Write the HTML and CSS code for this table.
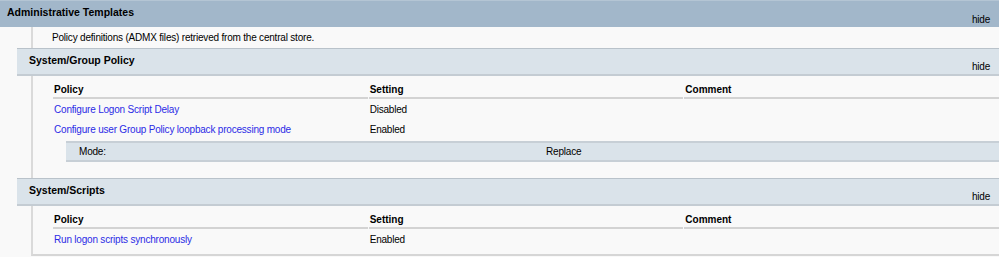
FILE: index.html
```html
<!DOCTYPE html>
<html>
<head>
<meta charset="utf-8">
<link rel="stylesheet" href="styles.css">
</head>
<body>
<div class="h0"><span class="title">Administrative Templates</span><span class="hide">hide</span></div>
<div class="c0">
  <div class="info">Policy definitions (ADMX files) retrieved from the central store.</div>
  <div class="h1"><span class="title">System/Group Policy</span><span class="hide">hide</span></div>
  <div class="c1 c1-long">
    <table class="pt">
      <thead><tr><th>Policy</th><th>Setting</th><th>Comment</th></tr></thead>
      <tbody>
        <tr><td><span class="link">Configure Logon Script Delay</span></td><td>Disabled</td><td></td></tr>
        <tr><td><span class="link">Configure user Group Policy loopback processing mode</span></td><td>Enabled</td><td></td></tr>
        <tr><td colspan="3" class="sub">
          <div class="mode"><span class="mcell">Mode:</span><span class="mcell">Replace</span></div>
        </td></tr>
      </tbody>
    </table>
  </div>
  <div class="h1"><span class="title">System/Scripts</span><span class="hide">hide</span></div>
  <div class="c1 c1-short">
    <table class="pt">
      <thead><tr><th>Policy</th><th>Setting</th><th>Comment</th></tr></thead>
      <tbody>
        <tr><td><span class="link">Run logon scripts synchronously</span></td><td>Enabled</td><td></td></tr>
      </tbody>
    </table>
  </div>
</div>
</body>
</html>
```
FILE: styles.css
```css
html, body {
  margin: 0;
  padding: 0;
  background: #f9f9f9;
}
body {
  font-family: "Liberation Sans", Arial, sans-serif;
  font-size: 10px;
  letter-spacing: -0.2px;
  color: #000;
}
.h0 {
  display: flex;
  justify-content: space-between;
  height: 27px;
  box-sizing: border-box;
  background: #a2b7ca;
  border-top: 1px solid #b4c5d4;
  padding: 0 9px 0 7px;
}
.title {
  font-weight: bold;
  font-size: 10.5px;
  letter-spacing: 0;
  line-height: 12px;
  padding-top: 5px;
}
.hide {
  align-self: flex-end;
  line-height: 12px;
  padding-bottom: 1px;
}
.c0 {
  margin-left: 31px;
  border-left: 2px solid #dadada;
  border-bottom: 2px solid #d6d6d6;
}
.info {
  height: 21px;
  line-height: 21px;
  padding-left: 19px;
}
.h1 {
  display: flex;
  justify-content: space-between;
  margin-left: -16px;
  height: 28px;
  box-sizing: border-box;
  background: #dae3ea;
  border-top: 1px solid #b9c2ca;
  border-bottom: 2px solid #c4ccd3;
  padding: 0 9px 0 12px;
}
.h1 .title {
  padding-top: 5px;
}
.c1 {
  padding: 8px 0 0 19px;
}
.c1-long {
  padding-bottom: 16px;
}
.c1-short {
  padding-bottom: 5px;
}
.pt {
  width: calc(100% + 1px);
  table-layout: fixed;
  border-collapse: separate;
  border-spacing: 1px 0;
  font-size: 10px;
}
.pt th {
  text-align: left;
  font-weight: bold;
  font-size: 10px;
  letter-spacing: 0;
  line-height: 12px;
  padding: 0 1px 1px 1px;
  border-bottom: 2px solid #d3d3d3;
}
.pt td {
  padding: 2px 1px 0 1px;
  line-height: 18px;
  vertical-align: top;
}
.link {
  color: #2b2be6;
}
.pt td.sub {
  padding: 2px 0 0 13px;
}
.mode {
  display: flex;
  height: 21px;
  box-sizing: border-box;
  background: #dae3ea;
  border-top: 2px solid #c7cfd6;
  border-bottom: 2px solid #c7cfd6;
  margin-right: -1px;
}
.mcell {
  flex: 1;
  padding-left: 13px;
  line-height: 17px;
}
```
